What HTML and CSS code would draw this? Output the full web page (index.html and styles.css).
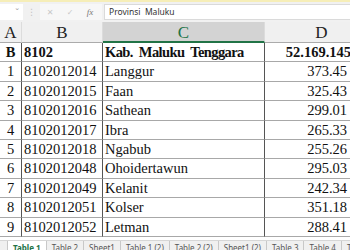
FILE: index.html
```html
<!DOCTYPE html>
<html>
	<head>
		<meta charset="UTF-8">
		<title>Kab. Maluku Tenggara</title>
		<link rel="stylesheet" href="styles.css">
	</head>
	<body>
		<div class="topline"></div>
		<div class="formula">
			<div class="namebox"><span class="arrow">&#8964;</span></div>
			<div class="dots">&#8942;</div>
			<div class="tools">
				<span class="tool">&#10005;</span>
				<span class="tool">&#10003;</span>
				<span class="tool fx"><i>fx</i></span>
			</div>
			<div class="input">Provinsi&nbsp; Maluku</div>
		</div>
		<div class="sheet">
			<div class="hd">A</div>
			<div class="hd">B</div>
			<div class="hd sel">C</div>
			<div class="hd">D</div>

			<div class="c ctr b">B</div>
			<div class="c b">8102</div>
			<div class="c b tight">Kab.&nbsp; Maluku&nbsp; Tenggara</div>
			<div class="c num b top">52.169.145</div>

			<div class="c ctr">1</div><div class="c">8102012014</div><div class="c">Langgur</div><div class="c num">373.45</div>
			<div class="c ctr">2</div><div class="c">8102012015</div><div class="c">Faan</div><div class="c num">325.43</div>
			<div class="c ctr">3</div><div class="c">8102012016</div><div class="c">Sathean</div><div class="c num">299.01</div>
			<div class="c ctr">4</div><div class="c">8102012017</div><div class="c">Ibra</div><div class="c num">265.33</div>
			<div class="c ctr">5</div><div class="c">8102012018</div><div class="c">Ngabub</div><div class="c num">255.26</div>
			<div class="c ctr">6</div><div class="c">8102012048</div><div class="c">Ohoidertawun</div><div class="c num">295.03</div>
			<div class="c ctr">7</div><div class="c">8102012049</div><div class="c">Kelanit</div><div class="c num">242.34</div>
			<div class="c ctr">8</div><div class="c">8102012051</div><div class="c">Kolser</div><div class="c num">351.18</div>
			<div class="c ctr">9</div><div class="c">8102012052</div><div class="c">Letman</div><div class="c num">288.41</div>
		</div>
		<div class="tabs">
			<span class="tab active">Table 1</span>
			<span class="tab">Table 2</span>
			<span class="tab">Sheet1</span>
			<span class="tab">Table 1 (2)</span>
			<span class="tab">Table 2 (2)</span>
			<span class="tab">Sheet1 (2)</span>
			<span class="tab">Table 3</span>
			<span class="tab">Table 4</span>
			<span class="tab">Table 5</span>
		</div>
	</body>
</html>
```

FILE: styles.css
```css
*{
	margin: 0;
	padding: 0;
	box-sizing: border-box;
}
body{
	width: 350px;
	height: 250px;
	overflow: hidden;
	background: #fff;
	font-family: "Liberation Serif", serif;
}
.topline{
	height: 2px;
	background: #f6eeb8;
}
.formula{
	display: flex;
	align-items: center;
	height: 20px;
	background: #f1f1f1;
	padding: 2px 0;
}
.namebox{
	width: 23px;
	height: 16px;
	background: #fff;
	position: relative;
}
.arrow{
	position: absolute;
	right: 3px;
	top: 0;
	font-size: 7px;
	color: #999;
	font-family: "DejaVu Sans", sans-serif;
}
.dots{
	width: 17px;
	text-align: center;
	font-size: 9px;
	color: #c4c4c4;
	font-family: "DejaVu Sans", sans-serif;
}
.tools{
	display: flex;
	align-items: center;
	height: 16px;
	width: 62px;
	background: #f7f7f7;
	margin-right: 2px;
	font-family: "DejaVu Sans", sans-serif;
}
.tool{
	width: 20px;
	text-align: center;
	font-size: 8px;
	color: #c8c8c8;
}
.fx{
	color: #777;
	font-family: "Liberation Serif", serif;
	font-size: 9px;
}
.input{
	flex: 1;
	height: 16px;
	background: #fff;
	border: 1px solid #dadada;
	border-right: 0;
	padding-left: 4px;
	font-family: "Noto Sans", sans-serif;
	font-size: 8.5px;
	line-height: 14px;
	color: #333;
}
.sheet{
	display: grid;
	grid-template-columns: 22px 81px 162px 114px;
	grid-template-rows: 21px;
	grid-auto-rows: 19.4px;
	width: 379px;
}
.hd{
	background: #f0f0f0;
	border-right: 1px solid #dcdcdc;
	border-bottom: 1px solid #ababab;
	text-align: center;
	font-size: 17px;
	line-height: 21px;
	color: #222;
}
.sel{
	background: #d3d3d3;
	color: #217346;
	border-bottom: 2px solid #217346;
}
.c{
	border-right: 1px solid #555;
	border-bottom: 1px solid #a8a8a8;
	font-size: 14.5px;
	line-height: 19px;
	padding-left: 2px;
	white-space: nowrap;
	overflow: hidden;
	color: #111;
}
.ctr{
	text-align: center;
	padding-left: 0;
}
.num{
	text-align: right;
	padding-right: 31px;
}
.b{
	font-weight: bold;
}
.tight{
	letter-spacing: -0.6px;
}
.top{
	padding-right: 27px;
}
.tabs{
	display: flex;
	margin-top: 3px;
	height: 10px;
	background: #f0f0f0;
	border-top: 1px solid #d6d6d6;
	padding-left: 7px;
	font-family: "Noto Sans", sans-serif;
	font-size: 8px;
	color: #555;
	white-space: nowrap;
}
.tab{
	padding: 1px 5px 0;
	border-left: 1px solid #c8c8c8;
	line-height: 12px;
}
.active{
	background: #fff;
	color: #217346;
	font-weight: bold;
}
```
